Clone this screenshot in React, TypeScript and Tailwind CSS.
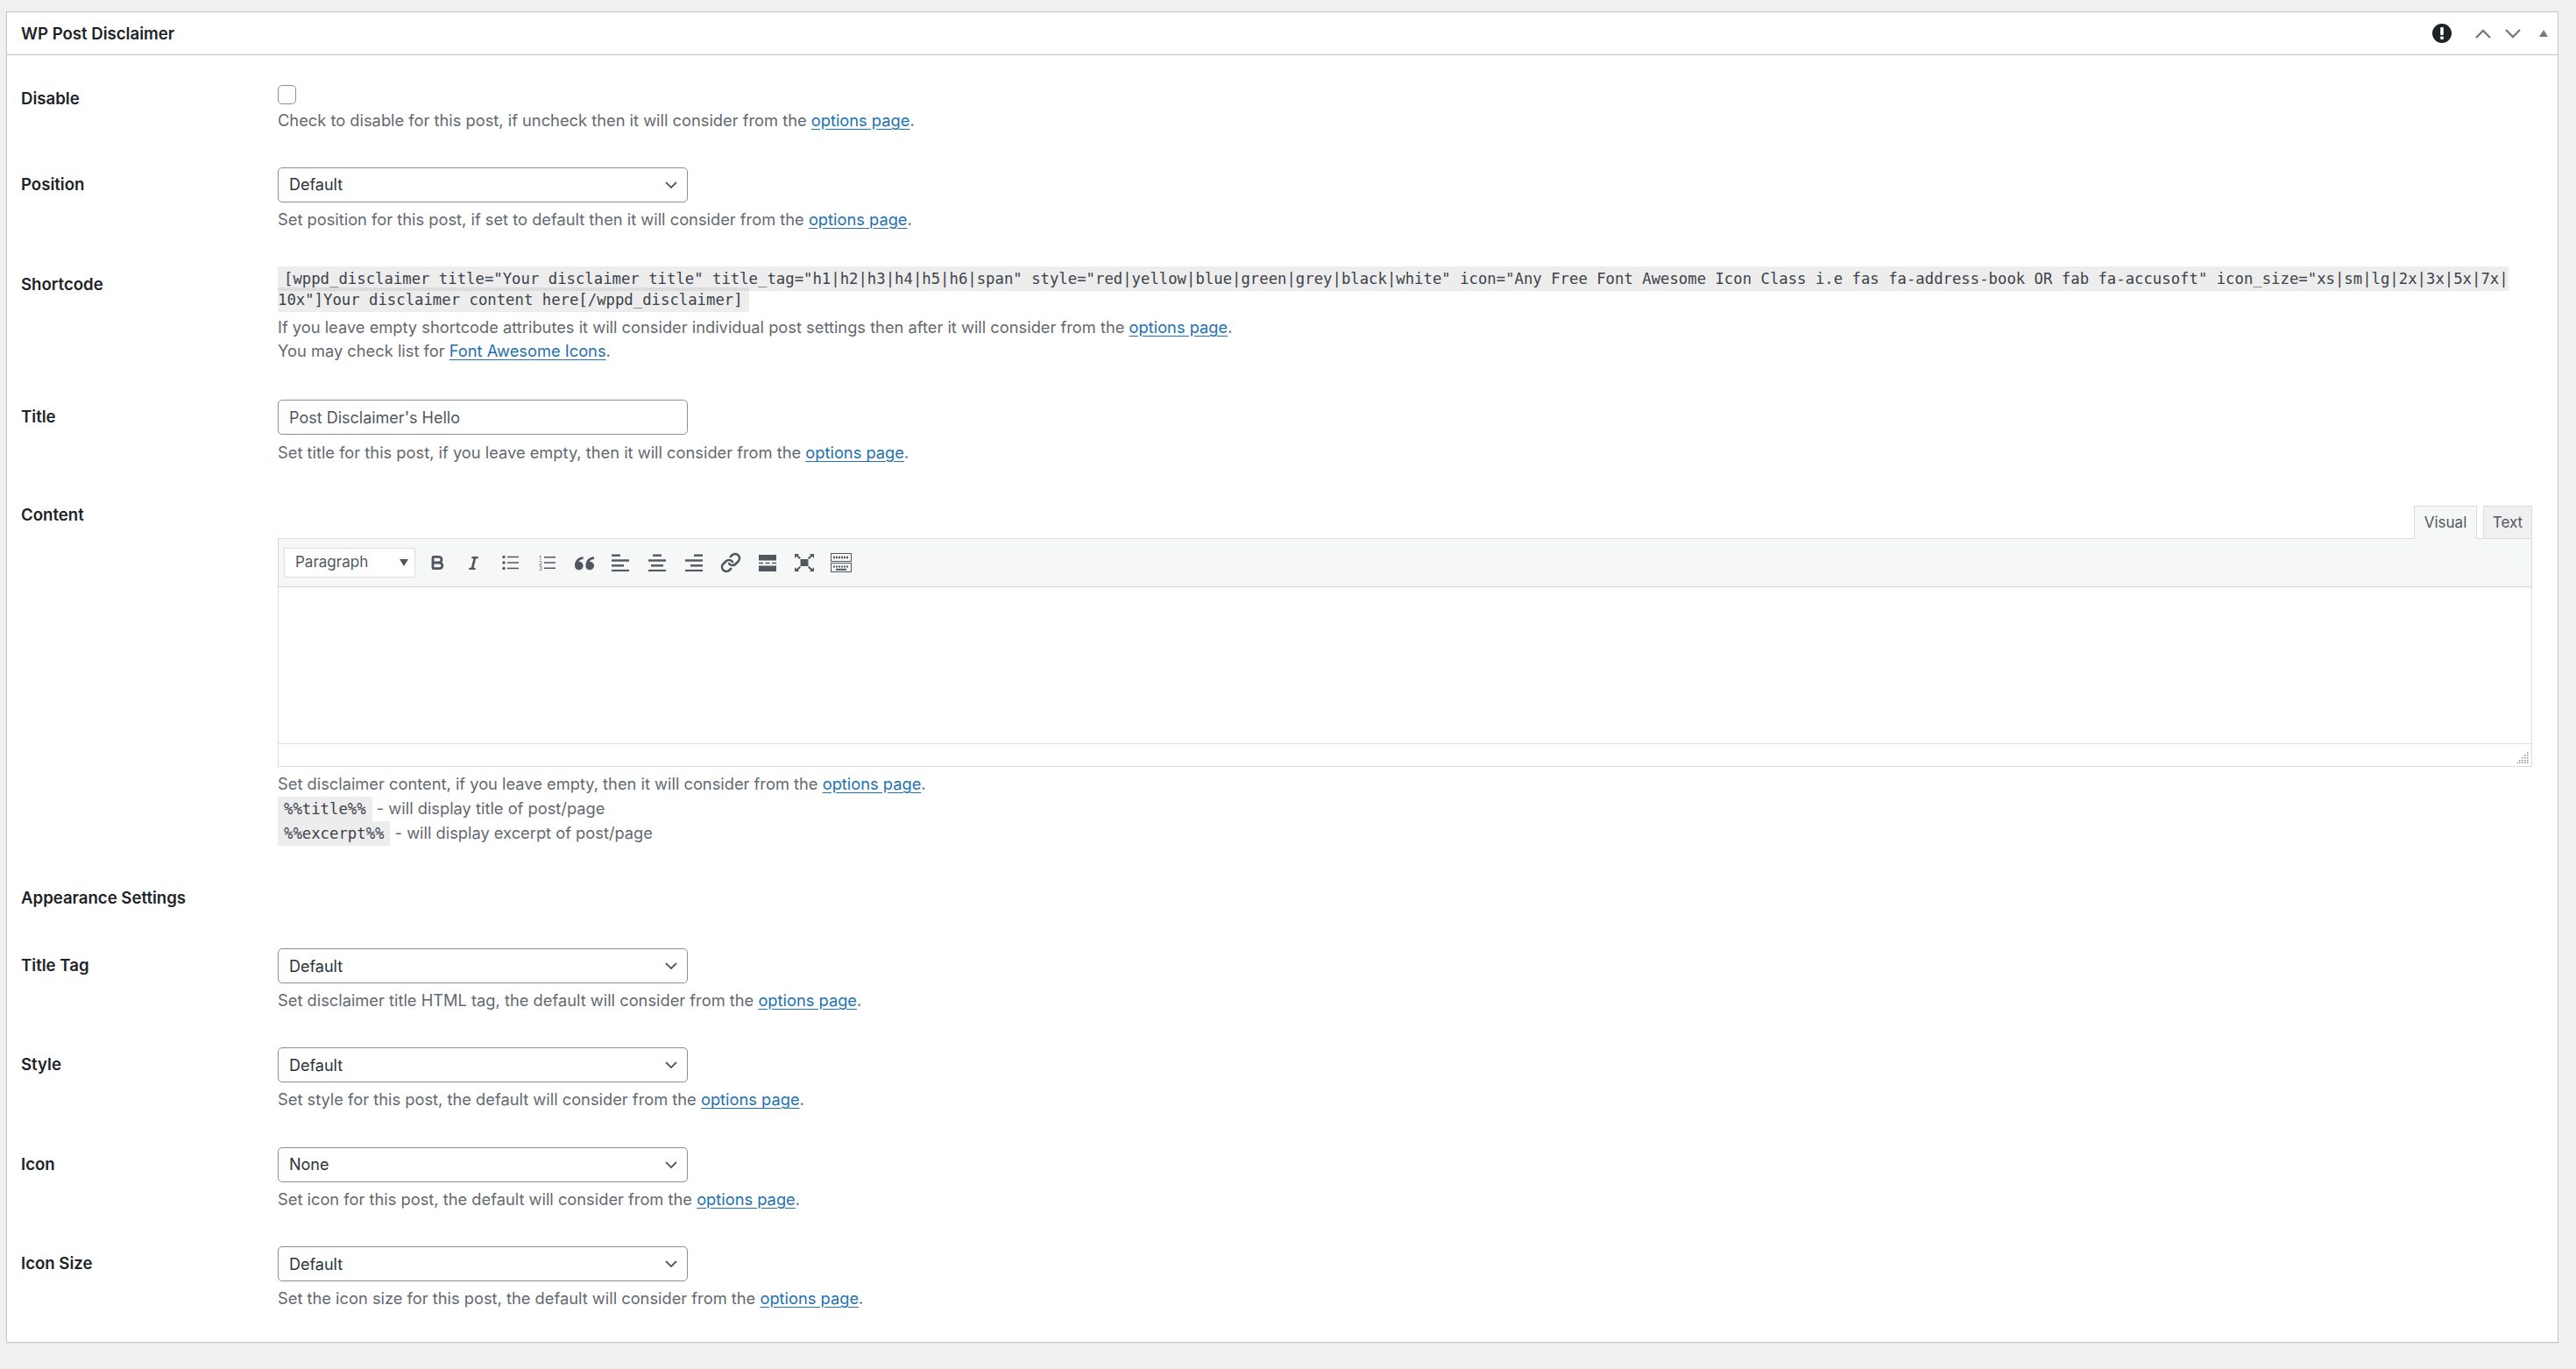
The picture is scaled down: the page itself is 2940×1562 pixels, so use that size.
import type { ReactNode } from "react";
import { Bold, Link } from "lucide-react";
import { FaItalic } from "react-icons/fa";
import { ImQuotesLeft } from "react-icons/im";

const sans = "font-['Inter','Noto_Sans',sans-serif]";

const OptionsLink = ({ text = "options page" }: { text?: string }) => (
  <a href="#" className="text-[#2271b1] underline underline-offset-[3px]">
    {text}
  </a>
);

const Desc = ({ children, className = "" }: { children: ReactNode; className?: string }) => (
  <p className={`text-[18.29px] leading-[26.67px] text-[#646970] ${className}`}>{children}</p>
);

const Row = ({
  label,
  labelClass,
  children,
}: {
  label: string;
  labelClass: string;
  children: ReactNode;
}) => (
  <div className="flex py-5 pl-4 pr-[29px]">
    <label className={`w-[293px] shrink-0 text-[18.6px] leading-[27px] font-semibold text-[#1d2327] ${labelClass}`}>
      {label}
    </label>
    <div className="min-w-0 flex-1">{children}</div>
  </div>
);

const SelectBox = ({ value }: { value: string }) => (
  <div className="relative h-10 w-[468px]">
    <select className="block h-10 w-full appearance-none rounded-[5px] border border-[#8c8f94] bg-white pl-3 text-[18px] text-[#2c3338]">
      <option>{value}</option>
    </select>
    <svg viewBox="0 0 14 8" className="pointer-events-none absolute top-4 right-3 h-2 w-3.5 text-[#50575e]">
      <path d="M1 1l6 6 6-6" fill="none" stroke="currentColor" strokeWidth="1.8" />
    </svg>
  </div>
);

const SelectRow = ({ label, value, children }: { label: string; value: string; children: ReactNode }) => (
  <Row label={label} labelClass="mt-[6px]">
    <SelectBox value={value} />
    <Desc className="mt-[6px] mb-[0.7px]">{children}</Desc>
  </Row>
);

const ToolIcon = ({ children }: { children: ReactNode }) => (
  <div className="flex h-8 w-[41.9px] items-center justify-center text-[#50575e]">{children}</div>
);

const AlignIcon = ({ lines }: { lines: number[][] }) => (
  <svg viewBox="0 0 20 20" className="h-[20px] w-[20px]" fill="currentColor">
    {lines.map(([x, w], i) => (
      <rect key={i} x={x} y={0.5 + i * 5.8} width={w} height="2.4" />
    ))}
  </svg>
);

const Toolbar = () => (
  <div className="relative flex h-[54px] items-center bg-[#f6f7f7] pl-[6px] shadow-[0_1px_1px_rgba(0,0,0,0.15)]">
    <div className="flex h-[34px] w-[150px] items-center justify-between border border-[#dcdcde] bg-white pr-[7px] pl-3 text-[17px] text-[#50575e]">
      Paragraph
      <svg viewBox="0 0 10 8" className="h-2 w-2.5 text-[#50575e]">
        <path d="M0 0h10L5 8z" fill="currentColor" />
      </svg>
    </div>
    <div className="ml-[4px] flex">
      <ToolIcon>
        <Bold size={20} strokeWidth={3.4} />
      </ToolIcon>
      <ToolIcon>
        <FaItalic size={17} />
      </ToolIcon>
      <ToolIcon>
        <svg viewBox="0 0 20 18" className="h-[18px] w-5" fill="currentColor">
          <circle cx="2" cy="2.5" r="1.7" />
          <circle cx="2" cy="9" r="1.7" />
          <circle cx="2" cy="15.5" r="1.7" />
          <rect x="6" y="1.7" width="13" height="1.5" />
          <rect x="6" y="8.2" width="13" height="1.5" />
          <rect x="6" y="14.7" width="13" height="1.5" />
        </svg>
      </ToolIcon>
      <ToolIcon>
        <svg viewBox="0 0 20 18" className="h-[18px] w-5" fill="currentColor">
          <text x="0" y="5.5" fontSize="6.5" fontFamily="Inter, sans-serif">1</text>
          <text x="0" y="11.5" fontSize="6.5" fontFamily="Inter, sans-serif">2</text>
          <text x="0" y="17.5" fontSize="6.5" fontFamily="Inter, sans-serif">3</text>
          <rect x="6" y="2" width="13" height="1.5" />
          <rect x="6" y="8.2" width="13" height="1.5" />
          <rect x="6" y="14.5" width="13" height="1.5" />
        </svg>
      </ToolIcon>
      <ToolIcon>
        <ImQuotesLeft size={22} />
      </ToolIcon>
      <ToolIcon>
        <AlignIcon lines={[[0, 10], [0, 20], [0, 14], [0, 20]]} />
      </ToolIcon>
      <ToolIcon>
        <AlignIcon lines={[[5, 10], [0, 20], [3, 14], [0, 20]]} />
      </ToolIcon>
      <ToolIcon>
        <AlignIcon lines={[[10, 10], [0, 20], [6, 14], [0, 20]]} />
      </ToolIcon>
      <ToolIcon>
        <Link size={24} strokeWidth={2.6} />
      </ToolIcon>
      <ToolIcon>
        <svg viewBox="0 0 20 19" className="h-[19px] w-5" fill="currentColor">
          <rect x="0" y="0" width="20" height="6.5" />
          <rect x="0" y="8.7" width="5" height="1.5" />
          <rect x="7.5" y="8.7" width="5" height="1.5" />
          <rect x="15" y="8.7" width="5" height="1.5" />
          <rect x="0" y="12.5" width="20" height="6.5" />
        </svg>
      </ToolIcon>
      <ToolIcon>
        <svg viewBox="0 0 22 20" className="h-5 w-[22px]" fill="currentColor">
          <rect x="6.5" y="6" width="9" height="8" />
          <path d="M0 0h5L3.6 1.4 7 4.6 5.6 6 2 2.8 0 5zM22 0h-5l1.4 1.4L15 4.6 16.4 6 20 2.8 22 5zM0 20h5l-1.4-1.4L7 15.4 5.6 14 2 17.2 0 15zM22 20h-5l1.4-1.4L15 15.4l1.4-1.4L20 17.2 22 15z" />
        </svg>
      </ToolIcon>
      <ToolIcon>
        <svg viewBox="0 0 24 22" className="h-[22px] w-6">
          <rect x="0.5" y="0.5" width="23" height="9" fill="none" stroke="currentColor" />
          <rect x="0.5" y="11.5" width="23" height="10" fill="none" stroke="currentColor" />
          <path d="M3 5h18" stroke="currentColor" strokeWidth="2.5" strokeDasharray="2 1" />
          <path d="M3 15.5h18" stroke="currentColor" strokeWidth="2" strokeDasharray="2 1" />
          <path d="M6 18.8h12" stroke="currentColor" strokeWidth="2" />
        </svg>
      </ToolIcon>
    </div>
  </div>
);

const Editor = () => (
  <div className="mt-2 w-[2573px]">
    <div className="flex justify-end">
      <div className="relative z-10 -mb-px h-[38px] w-[72px] border border-b-0 border-[#dcdcde] bg-[#f6f7f7] pt-[5px] text-center text-[17px] leading-[26px] text-[#50575e]">
        Visual
      </div>
      <div className="ml-[7px] h-[37px] w-[56px] border border-b-0 border-[#dcdcde] bg-[#f0f0f1] pt-[5px] text-center text-[17px] leading-[26px] text-[#50575e]">
        Text
      </div>
    </div>
    <div className="border border-[#dcdcde]">
      <Toolbar />
      <div className="h-[179px] bg-white" />
      <div className="relative h-[26px] border-t border-[#dcdcde] bg-white">
        <svg viewBox="0 0 13 13" className="absolute right-[3px] bottom-[3px] h-[13px] w-[13px] text-[#8c8f94]" fill="currentColor">
          <rect x="11" y="0" width="1.5" height="1.5" />
          <rect x="11" y="3" width="1.5" height="1.5" />
          <rect x="8" y="3" width="1.5" height="1.5" />
          <rect x="11" y="6" width="1.5" height="1.5" />
          <rect x="8" y="6" width="1.5" height="1.5" />
          <rect x="5" y="6" width="1.5" height="1.5" />
          <rect x="11" y="9" width="1.5" height="1.5" />
          <rect x="8" y="9" width="1.5" height="1.5" />
          <rect x="5" y="9" width="1.5" height="1.5" />
          <rect x="2" y="9" width="1.5" height="1.5" />
          <rect x="11" y="11.5" width="1.5" height="1.5" />
          <rect x="8" y="11.5" width="1.5" height="1.5" />
          <rect x="5" y="11.5" width="1.5" height="1.5" />
          <rect x="2" y="11.5" width="1.5" height="1.5" />
          <rect x="0" y="11.5" width="1" height="1.5" />
        </svg>
      </div>
    </div>
  </div>
);

const Code = ({ children }: { children: ReactNode }) => (
  <code className="bg-black/[0.07] px-[7px] py-[4px] font-['DejaVu_Sans_Mono',monospace] text-[17.3px] text-[#3c434a]">
    {children}
  </code>
);

const App = () => {
  return (
    <div className={`min-h-[1562px] bg-[#f0f0f1] pt-[13px] pl-[7px] ${sans}`}>
      <div className="w-[2913px] border border-[#c3c4c7] bg-white shadow-[0_1px_1px_rgba(0,0,0,0.04)]">
        <div className="flex h-[49px] items-center justify-between border-b border-[#c3c4c7] pr-[11px] pl-4">
          <h2 className="mt-[2px] text-[18.6px] font-semibold text-[#1d2327]">WP Post Disclaimer</h2>
          <div className="flex items-center">
            <svg viewBox="0 0 22 22" className="h-[22px] w-[22px]">
              <circle cx="11" cy="11" r="11" fill="#1d2327" />
              <rect x="9.2" y="4" width="3.6" height="9" rx="1" fill="#fff" />
              <rect x="9.2" y="14.5" width="3.6" height="3.4" rx="0.8" fill="#fff" />
            </svg>
            <svg viewBox="0 0 18 11" className="ml-[27px] h-[11px] w-[18px] text-[#787c82]">
              <path d="M1 10l8-8 8 8" fill="none" stroke="currentColor" strokeWidth="2.4" />
            </svg>
            <svg viewBox="0 0 18 11" className="ml-4 h-[11px] w-[18px] text-[#787c82]">
              <path d="M1 1l8 8 8-8" fill="none" stroke="currentColor" strokeWidth="2.4" />
            </svg>
            <svg viewBox="0 0 10 8" className="ml-[21px] h-2 w-[10px] text-[#787c82]">
              <path d="M5 0l5 8H0z" fill="currentColor" />
            </svg>
          </div>
        </div>

        <div className="pt-[14px] pb-[15px]">
          <Row label="Disable" labelClass="mt-[2px]">
            <input
              type="checkbox"
              className="block h-[22px] w-[21px] appearance-none rounded-[5px] border border-[#8c8f94] bg-white"
            />
            <Desc className="mt-[5px]">
              Check to disable for this post, if uncheck then it will consider from the <OptionsLink />.
            </Desc>
          </Row>

          <SelectRow label="Position" value="Default">
            Set position for this post, if set to default then it will consider from the <OptionsLink />.
          </SelectRow>

          <Row label="Shortcode" labelClass="mt-[6.5px]">
            <div className="mt-[2px] leading-[24px]">
              <Code>
                [wppd_disclaimer title="Your disclaimer title" title_tag="h1|h2|h3|h4|h5|h6|span"
                style="red|yellow|blue|green|grey|black|white" icon="Any Free Font Awesome Icon Class i.e fas
                fa-address-book OR fab fa-accusoft" icon_size="xs|sm|lg|2x|3x|5x|7x|
                <br />
                10x"]Your disclaimer content here[/wppd_disclaimer]
              </Code>
            </div>
            <Desc className="mt-[6px]">
              If you leave empty shortcode attributes it will consider individual post settings then after it will
              consider from the <OptionsLink />.
            </Desc>
            <Desc className="mb-[3px] text-[#3c434a]">
              You may check list for <OptionsLink text="Font Awesome Icons" />.
            </Desc>
          </Row>

          <Row label="Title" labelClass="mt-[6px]">
            <input
              type="text"
              readOnly
              value="Post Disclaimer's Hello"
              className="block h-10 w-[468px] rounded-[5px] border border-[#8c8f94] bg-white px-3 text-[18px] text-[#50575e]"
            />
            <Desc className="mt-[7px] -mb-px">
              Set title for this post, if you leave empty, then it will consider from the <OptionsLink />.
            </Desc>
          </Row>

          <Row label="Content" labelClass="mt-[5px]">
            <Editor />
            <Desc className="mt-[6px]">
              Set disclaimer content, if you leave empty, then it will consider from the <OptionsLink />.
            </Desc>
            <Desc className="mt-[1px]">
              <Code>%%title%%</Code> - will display title of post/page
            </Desc>
            <Desc className="mt-[1px]">
              <Code>%%excerpt%%</Code> - will display excerpt of post/page
            </Desc>
          </Row>

          <div className="pt-[6px] pb-[4px]">
            <Row label="Appearance Settings" labelClass="">
              <div className="h-[27px]" />
            </Row>
          </div>

          <SelectRow label="Title Tag" value="Default">
            Set disclaimer title HTML tag, the default will consider from the <OptionsLink />.
          </SelectRow>
          <SelectRow label="Style" value="Default">
            Set style for this post, the default will consider from the <OptionsLink />.
          </SelectRow>
          <SelectRow label="Icon" value="None">
            Set icon for this post, the default will consider from the <OptionsLink />.
          </SelectRow>
          <SelectRow label="Icon Size" value="Default">
            Set the icon size for this post, the default will consider from the <OptionsLink />.
          </SelectRow>
        </div>
      </div>
    </div>
  );
};

export default App;
